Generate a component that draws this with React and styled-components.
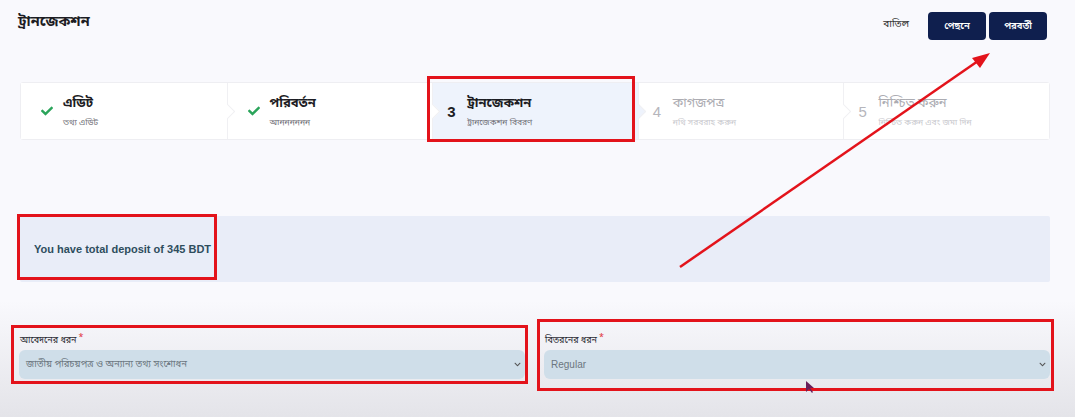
import React from 'react';
import styled, { createGlobalStyle } from 'styled-components';
import { FaCheck, FaChevronDown } from 'react-icons/fa';

const bn = `"Noto Sans Bengali", "Noto Serif Bengali", "Lohit Bengali", "Noto Sans", sans-serif`;

const GlobalStyle = createGlobalStyle`
  html, body {
    margin: 0;
    padding: 0;
  }
  body {
    width: 1075px;
    height: 417px;
    overflow: hidden;
    background: linear-gradient(180deg, #f9f9fd 0%, #f9f9fd 72%, #e4e4e9 100%);
    font-family: ${bn};
  }
`;

const Page = styled.div`
  position: relative;
  width: 1075px;
  height: 417px;
  box-sizing: border-box;
  padding: 12px 25px 0 20px;
`;

const Header = styled.div`
  display: flex;
  justify-content: space-between;
  align-items: flex-start;
  height: 28px;
`;

const Title = styled.h1`
  margin: 0;
  padding-top: 1px;
  margin-left: -2px;
  font-size: 14.5px;
  font-weight: 700;
  color: #1d1d24;
`;

const Actions = styled.div`
  display: flex;
  align-items: center;
  gap: 3px;
  margin-right: 3px;
`;

const CancelLink = styled.span`
  font-size: 10px;
  color: #333;
  margin-right: 16px;
  margin-top: -4px;
`;

const NavButton = styled.button`
  width: 58px;
  height: 28px;
  border: none;
  border-radius: 4px;
  background: #0f1f4e;
  color: #fff;
  font-family: ${bn};
  font-size: 9.5px;
  font-weight: 600;
`;

const Stepper = styled.div`
  margin-top: 42px;
  height: 56px;
  display: grid;
  grid-template-columns: repeat(5, 1fr);
  background: #fff;
  border: 1px solid #eeeef2;
  border-radius: 3px;
`;

const Step = styled.div`
  position: relative;
  display: flex;
  align-items: center;
  padding-left: ${p => (p.$done ? 20 : 14)}px;
  background: ${p => (p.$active ? '#eef3fc' : '#fff')};
  border-left: ${p => (p.$first ? 'none' : '1px solid #f0f0f3')};

  &::before {
    content: '';
    display: ${p => (p.$first ? 'none' : 'block')};
    position: absolute;
    left: -6px;
    top: 50%;
    width: 10px;
    height: 10px;
    margin-top: -5px;
    transform: rotate(45deg);
    background: ${p => (p.$prevActive ? '#eef3fc' : '#fff')};
    border-top: 1px solid #f0f0f3;
    border-right: 1px solid #f0f0f3;
  }
`;

const StepIcon = styled.div`
  width: ${p => (p.$done ? 22 : 20)}px;
  flex-shrink: 0;
  font-family: "Liberation Sans", Arial, sans-serif;
  font-size: 15px;
  color: ${p => (p.$active ? '#1d1d24' : '#b6b6bc')};
  font-weight: ${p => (p.$active ? 600 : 400)};
  svg {
    color: #2aa45a;
    font-size: 12px;
  }
`;

const StepText = styled.div`
  display: flex;
  flex-direction: column;
  gap: 4px;
`;

const StepTitle = styled.div`
  font-size: 13px;
  font-weight: ${p => (p.$muted ? 400 : 700)};
  color: ${p => (p.$muted ? '#acacb2' : '#1d1d24')};
  line-height: 18px;
`;

const StepSub = styled.div`
  font-size: 8.5px;
  color: ${p => (p.$muted ? '#c9c9ce' : '#707078')};
  line-height: 11px;
`;

const DepositBox = styled.div`
  margin-top: 76px;
  height: 66px;
  display: flex;
  align-items: center;
  padding-left: 14px;
  background: #e9edf8;
  border-radius: 2px;
  font-family: "Liberation Sans", Arial, sans-serif;
  font-size: 11px;
  font-weight: 700;
  color: #2e4d5e;
`;

const FormRow = styled.div`
  margin-top: 50px;
  display: grid;
  grid-template-columns: 1fr 1fr;
  gap: 19px;
  margin-left: -1px;
`;

const Field = styled.div`
  display: flex;
  flex-direction: column;
  gap: 3px;
`;

const Label = styled.label`
  font-size: 9px;
  color: #2a2a33;
  padding-left: 1px;
  span {
    color: #e0303a;
    margin-left: 2px;
    vertical-align: 3px;
    font-size: 9px;
  }
`;

const Select = styled.div`
  height: 29px;
  display: flex;
  align-items: center;
  justify-content: space-between;
  padding: 0 4px 0 7px;
  background: #cfdee9;
  border-radius: 6px;
  font-family: ${p => (p.$latin ? '"Liberation Sans", Arial, sans-serif' : bn)};
  font-size: ${p => (p.$latin ? 10 : 9.5)}px;
  color: #6b7680;
  svg {
    font-size: 7px;
    color: #555;
  }
`;

const Mark = styled.div`
  position: absolute;
  border: 3px solid #e3131b;
  box-sizing: border-box;
  pointer-events: none;
`;

const ArrowLayer = styled.svg`
  position: absolute;
  left: 0;
  top: 0;
  pointer-events: none;
`;

const steps = [
  { title: 'এডিট', sub: 'তথ্য এডিট', done: true },
  { title: 'পরিবর্তন', sub: 'আনননননন', done: true },
  { title: 'ট্রানজেকশন', sub: 'ট্রানজেকশন বিবরণ', active: true, n: 3 },
  { title: 'কাগজপত্র', sub: 'নথি সরবরাহ করুন', n: 4 },
  { title: 'নিশ্চিত করুন', sub: 'নিশ্চিত করুন এবং জমা দিন', n: 5 },
];

const marks = [
  { left: 427, top: 76, width: 208, height: 66 },
  { left: 17, top: 214, width: 200, height: 66 },
  { left: 11, top: 325, width: 517, height: 59 },
  { left: 537, top: 319, width: 517, height: 72 },
];

export default function App() {
  return (
    <>
      <GlobalStyle />
      <Page>
        <Header>
          <Title>ট্রানজেকশন</Title>
          <Actions>
            <CancelLink>বাতিল</CancelLink>
            <NavButton>পেছনে</NavButton>
            <NavButton>পরবর্তী</NavButton>
          </Actions>
        </Header>

        <Stepper>
          {steps.map((s, i) => (
            <Step
              key={s.title}
              $first={i === 0}
              $done={s.done}
              $active={s.active}
              $prevActive={i > 0 && steps[i - 1].active}
            >
              <StepIcon $done={s.done} $active={s.active}>
                {s.done ? <FaCheck /> : s.n}
              </StepIcon>
              <StepText>
                <StepTitle $muted={!s.done && !s.active}>{s.title}</StepTitle>
                <StepSub $muted={!s.done && !s.active}>{s.sub}</StepSub>
              </StepText>
            </Step>
          ))}
        </Stepper>

        <DepositBox>You have total deposit of 345 BDT</DepositBox>

        <FormRow>
          <Field>
            <Label>আবেদনের ধরন<span>*</span></Label>
            <Select>
              জাতীয় পরিচয়পত্র ও অন্যান্য তথ্য সংশোধন
              <FaChevronDown />
            </Select>
          </Field>
          <Field>
            <Label>বিতরনের ধরন<span>*</span></Label>
            <Select $latin>
              Regular
              <FaChevronDown />
            </Select>
          </Field>
        </FormRow>

        {marks.map((m, i) => (
          <Mark key={i} style={m} />
        ))}

        <ArrowLayer width="1075" height="417" viewBox="0 0 1075 417">
          <line x1="680" y1="267" x2="978" y2="61" stroke="#e3131b" strokeWidth="2.5" />
          <polygon points="990,53 972,58 980,68" fill="#e3131b" />
          <polygon points="806,381 806,392 809,389 812,393 813,392 810,388 814,388" fill="#6a1f5a" />
        </ArrowLayer>
      </Page>
    </>
  );
}
